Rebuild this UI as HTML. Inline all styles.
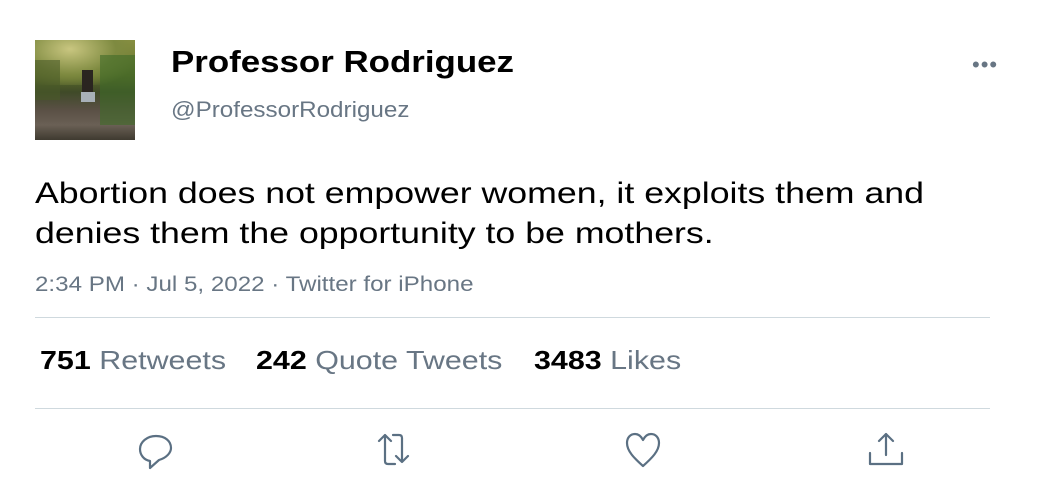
<!DOCTYPE html>
<html><head><style>
body{margin:0;width:1050px;height:480px;background:#fff;font-family:"Liberation Sans",Arial,sans-serif;position:relative;overflow:hidden}
.a{position:absolute;white-space:nowrap;transform-origin:0 0}
.g{color:#687684}
</style></head><body>
<div class="a" style="left:35px;top:40px;width:100px;height:100px;background:linear-gradient(180deg,#8a9040 0%,#5d6d2a 35%,#3f4a28 52%,#5a5045 70%,#6a6055 85%,#3f3a30 100%)">
<div class="a" style="left:0;top:0;width:100px;height:45px;background:radial-gradient(ellipse at 35% 20%,#c9c680 0%,#7e8a40 50%,rgba(80,100,40,0) 80%)"></div>
<div class="a" style="left:65px;top:15px;width:35px;height:70px;background:#3f6a28;opacity:.6"></div>
<div class="a" style="left:0;top:20px;width:25px;height:40px;background:#4a5a28;opacity:.6"></div>
<div class="a" style="left:120px;top:0"></div>
<div class="a" style="left:47px;top:30px;width:11px;height:26px;background:#2a2520"></div>
<div class="a" style="left:46px;top:52px;width:14px;height:10px;background:#a8b0b8"></div>
</div>
<div class="a" style="left:171px;top:44px;font-size:31px;font-weight:bold;color:#000;transform:scaleX(1.125)">Professor Rodriguez</div>
<div class="a g" style="left:171px;top:97px;font-size:22px;transform:scaleX(1.1)">@ProfessorRodriguez</div>
<div class="a" style="left:972px;top:52px;font-size:22px;color:#687684;letter-spacing:1px">•••</div>
<div class="a" style="left:35px;top:174px;font-size:30px;line-height:40px;color:#000;transform:scaleX(1.19)">Abortion does not empower women, it exploits them and<br>denies them the opportunity to be mothers.</div>
<div class="a g" style="left:35px;top:273px;font-size:21px;transform:scaleX(1.15)">2:34 PM · Jul 5, 2022 · Twitter for iPhone</div>
<div class="a" style="left:35px;top:317px;width:955px;height:1px;background:#cfd9de"></div>
<div class="a" style="left:40px;top:345px;font-size:26px;color:#000;transform:scaleX(1.17)"><b>751</b> <span class="g">Retweets</span></div>
<div class="a" style="left:256px;top:345px;font-size:26px;color:#000;transform:scaleX(1.17)"><b>242</b> <span class="g">Quote Tweets</span></div>
<div class="a" style="left:534px;top:345px;font-size:26px;color:#000;transform:scaleX(1.17)"><b>3483</b> <span class="g">Likes</span></div>
<div class="a" style="left:35px;top:408px;width:955px;height:1px;background:#cfd9de"></div>
<svg class="a" style="left:0;top:425px" width="1050" height="50" fill="none" stroke="#5b7083" stroke-width="2.2" stroke-linecap="round" stroke-linejoin="round">
<path d="M156 11c-9 0-16 6-16 13 0 6 4 11 10 12v7l9-8c7-2 12-7 12-12 0-7-6-12-15-12z"/>
<path d="M385 36V10M379 16l6-6 6 6M393 10h6c2 0 3 1 3 3v23M396 31l6 6 6-6M385 36c0 2 1 3 3 3h7"/>
<path d="M643 41c-9-8-16-15-16-23 0-5 3-9 8-9 3 0 6 2 8 6 2-4 5-6 8-6 5 0 8 4 8 9 0 8-7 15-16 23z"/>
<path d="M886 30V9M879 16l7-7 7 7M870 28v11h32V28"/>
</svg>
</body></html>
